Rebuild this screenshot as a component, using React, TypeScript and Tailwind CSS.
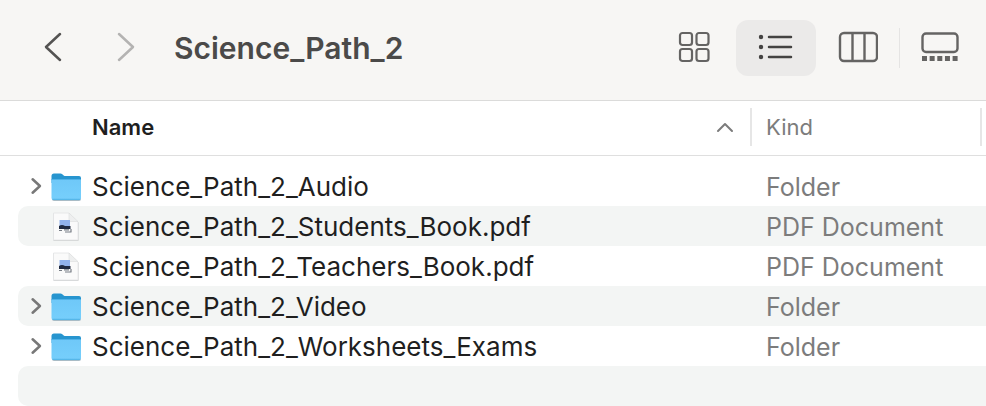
import { useState } from "react";
import type { ReactNode } from "react";

type Item = { name: string; kind: string };

const items: Item[] = [
  { name: "Science_Path_2_Audio", kind: "Folder" },
  { name: "Science_Path_2_Students_Book.pdf", kind: "PDF Document" },
  { name: "Science_Path_2_Teachers_Book.pdf", kind: "PDF Document" },
  { name: "Science_Path_2_Video", kind: "Folder" },
  { name: "Science_Path_2_Worksheets_Exams", kind: "Folder" },
];

function FolderIcon() {
  return (
    <svg width="30" height="28" viewBox="0 0 30 28" aria-hidden="true">
      <defs>
        <linearGradient id="folder" x1="0" y1="0" x2="0" y2="1">
          <stop offset="0" stopColor="#6fc8f8" />
          <stop offset="1" stopColor="#76cffc" />
        </linearGradient>
      </defs>
      <rect x="1" y="6" width="29" height="22" rx="2" fill="#a9bcc6" />
      <path d="M.5 3Q.5.5 3 .5h6.500q1 0 1.800.700l1.400 1.200q.800.600 1.800.600H28q2 0 2 2V10H.5z" fill="#2795cf" />
      <path d="M.5 6.500H30V25q0 2-2 2H2.500q-2 0-2-2z" fill="url(#folder)" />
      <path d="M.5 6.500H30" stroke="#4eb2e8" strokeWidth="1" />
      <path d="M1.500 26.300H29" stroke="#4fb1e4" strokeWidth="1" />
    </svg>
  );
}

function PdfIcon() {
  return (
    <svg width="30" height="30" viewBox="0 0 30 30" aria-hidden="true">
      <path d="M2.500 1.500H18L27.500 10.500V28.800H2.500z" fill="#c4c6c7" />
      <path d="M2.500 1H18L27 10V28H2.500z" fill="#fafafa" stroke="#e2e3e4" strokeWidth=".8" />
      <path d="M18 1v8.500h9z" fill="#eeefef" stroke="#dcddde" strokeWidth=".6" />
      <path d="M8.500 8H19v6.500H8.500z" fill="#91b2ec" />
      <path d="M8 14q3-2 6 0h5.500v3H8z" fill="#202a42" />
      <path d="M8 18.500h3M13 17.800h5M14 20h6.500M20 17v3" stroke="#777d85" strokeWidth="1.200" fill="none" />
    </svg>
  );
}

function Chevron({ d, size, width }: { d: string; size: string; width: number }) {
  return (
    <svg viewBox="0 0 20 32" className={size} fill="none" stroke="currentColor" strokeWidth={width} strokeLinecap="round" strokeLinejoin="round" aria-hidden="true">
      <path d={d} />
    </svg>
  );
}

const views: { id: string; icon: ReactNode }[] = [
  {
    id: "Icons",
    icon: (
      <svg width="32" height="32" viewBox="0 0 32 32" fill="none" stroke="currentColor" strokeWidth="2.200">
        <rect x="2" y="2" width="12" height="12" rx="2.500" />
        <rect x="18.500" y="2" width="12" height="12" rx="2.500" />
        <rect x="2" y="18" width="12" height="12" rx="2.500" />
        <rect x="18.500" y="18" width="12" height="12" rx="2.500" />
      </svg>
    ),
  },
  {
    id: "List",
    icon: (
      <svg width="36" height="28" viewBox="0 0 36 28" fill="none" stroke="#444342" strokeWidth="2.500" strokeLinecap="round">
        <path d="M11 4h22M11 14h22M11 24h22" />
        <path d="M3 4h.01M3 14h.01M3 24h.01" strokeWidth="4.400" />
      </svg>
    ),
  },
  {
    id: "Columns",
    icon: (
      <svg width="40" height="32" viewBox="0 0 40 32" fill="none" stroke="currentColor" strokeWidth="2.400">
        <rect x="2" y="2" width="37" height="28" rx="4" />
        <path d="M14.500 2v28M26.500 2v28" />
      </svg>
    ),
  },
  {
    id: "Gallery",
    icon: (
      <svg width="38" height="30" viewBox="0 0 38 30" fill="none" stroke="currentColor" strokeWidth="2.400">
        <rect x="1.500" y="1.500" width="35" height="18.500" rx="3.500" />
        <path d="M1 26.500h36" strokeWidth="5" strokeDasharray="5 2.650" />
      </svg>
    ),
  },
];

function Toolbar() {
  const [view, setView] = useState("List");

  return (
    <header className="flex h-[101px] items-start border-b border-[#dbdbda] bg-[#f7f6f4] pt-5 pr-1.5 pl-4">
      <button aria-label="Back" className="flex h-14 w-[73px] items-center justify-center pb-0.5 text-[#545352]">
        <Chevron d="M17 3 3 16l14 13" size="h-8 w-5" width={2.5} />
      </button>
      <button aria-label="Forward" disabled className="flex h-14 w-[73px] items-center justify-center pb-0.5 text-[#b4b3b2]">
        <Chevron d="m3 3 14 13L3 29" size="h-8 w-5" width={2.5} />
      </button>
      <h1 className="ml-3 text-[30px] leading-[56px] font-semibold text-[#4b4a49]">Science_Path_2</h1>
      <div className="ml-auto flex items-center">
        {views.map((v, i) => (
          <div key={v.id} className="flex items-center">
            {i > 0 && <span className={i === 3 ? "h-10 w-0.5 border-r border-[#e5e4e3]" : "w-0.5"} />}
            <button
              aria-label={v.id}
              aria-pressed={view === v.id}
              onClick={() => setView(v.id)}
              className={`flex h-14 w-20 items-center justify-center rounded-xl pb-0.5 text-[#656463] ${view === v.id ? "bg-[#ebeae9]" : ""}`}
            >
              {v.icon}
            </button>
          </div>
        ))}
      </div>
    </header>
  );
}

function Row({ item, striped }: { item?: Item; striped: boolean }) {
  const bg = striped ? "bg-[#f3f5f4]" : "";

  return (
    <tr>
      <td className="pl-[18px]">
        <div className={`flex h-10 items-center rounded-l-[10px] pt-0.5 pl-3 text-[26px] text-[#1f1f1f] ${bg}`}>
          {item && (
            <>
              <div className="mr-[9px] flex w-3 shrink-0">
                {item.kind === "Folder" && (
                  <button aria-label={`Expand ${item.name}`} className="pb-0.5 text-[#787878]">
                    <Chevron d="m4 4 13 12L4 28" size="h-[18px] w-3" width={4.500} />
                  </button>
                )}
              </div>
              {item.kind === "Folder" ? <FolderIcon /> : <PdfIcon />}
              <span className="ml-[11px]">{item.name}</span>
            </>
          )}
        </div>
      </td>
      <td className={`pt-0.5 pl-3.5 text-[25px] text-[#7c7c7c] ${bg}`}>{item?.kind}</td>
      <td className={bg}></td>
    </tr>
  );
}

export default function App() {
  return (
    <main className="min-h-screen bg-white font-['Inter',sans-serif]">
      <Toolbar />
      <table className="w-full table-fixed border-collapse text-left leading-9">
        <colgroup>
          <col />
          <col className="w-[230px]" />
          <col className="w-1" />
        </colgroup>
        <thead>
          <tr className="h-[54px] border-b border-[#dfdfdf] text-[22px]">
            <th className="pt-[7px] pl-[92px] align-top font-semibold text-[#1f1f1f]">
              <button className="flex h-[38px] w-full items-center justify-between border-r-2 border-[#e6e6e6] pr-4">
                Name
                <svg width="18" height="12" viewBox="0 0 18 12" fill="none" stroke="#7c7c7c" strokeWidth="2" strokeLinecap="round" strokeLinejoin="round" aria-hidden="true">
                  <path d="m2 10 7-7 7 7" />
                </svg>
              </button>
            </th>
            <th className="pt-[7px] align-top font-normal text-[#7c7c7c]">
              <button className="flex h-[38px] w-full items-center border-r-2 border-[#e6e6e6] pl-3.5">Kind</button>
            </th>
            <th></th>
          </tr>
        </thead>
        <tbody className="before:block before:h-2.5">
          {items.map((item, i) => (
            <Row key={item.name} item={item} striped={i % 2 === 1} />
          ))}
          <Row striped />
        </tbody>
      </table>
    </main>
  );
}
